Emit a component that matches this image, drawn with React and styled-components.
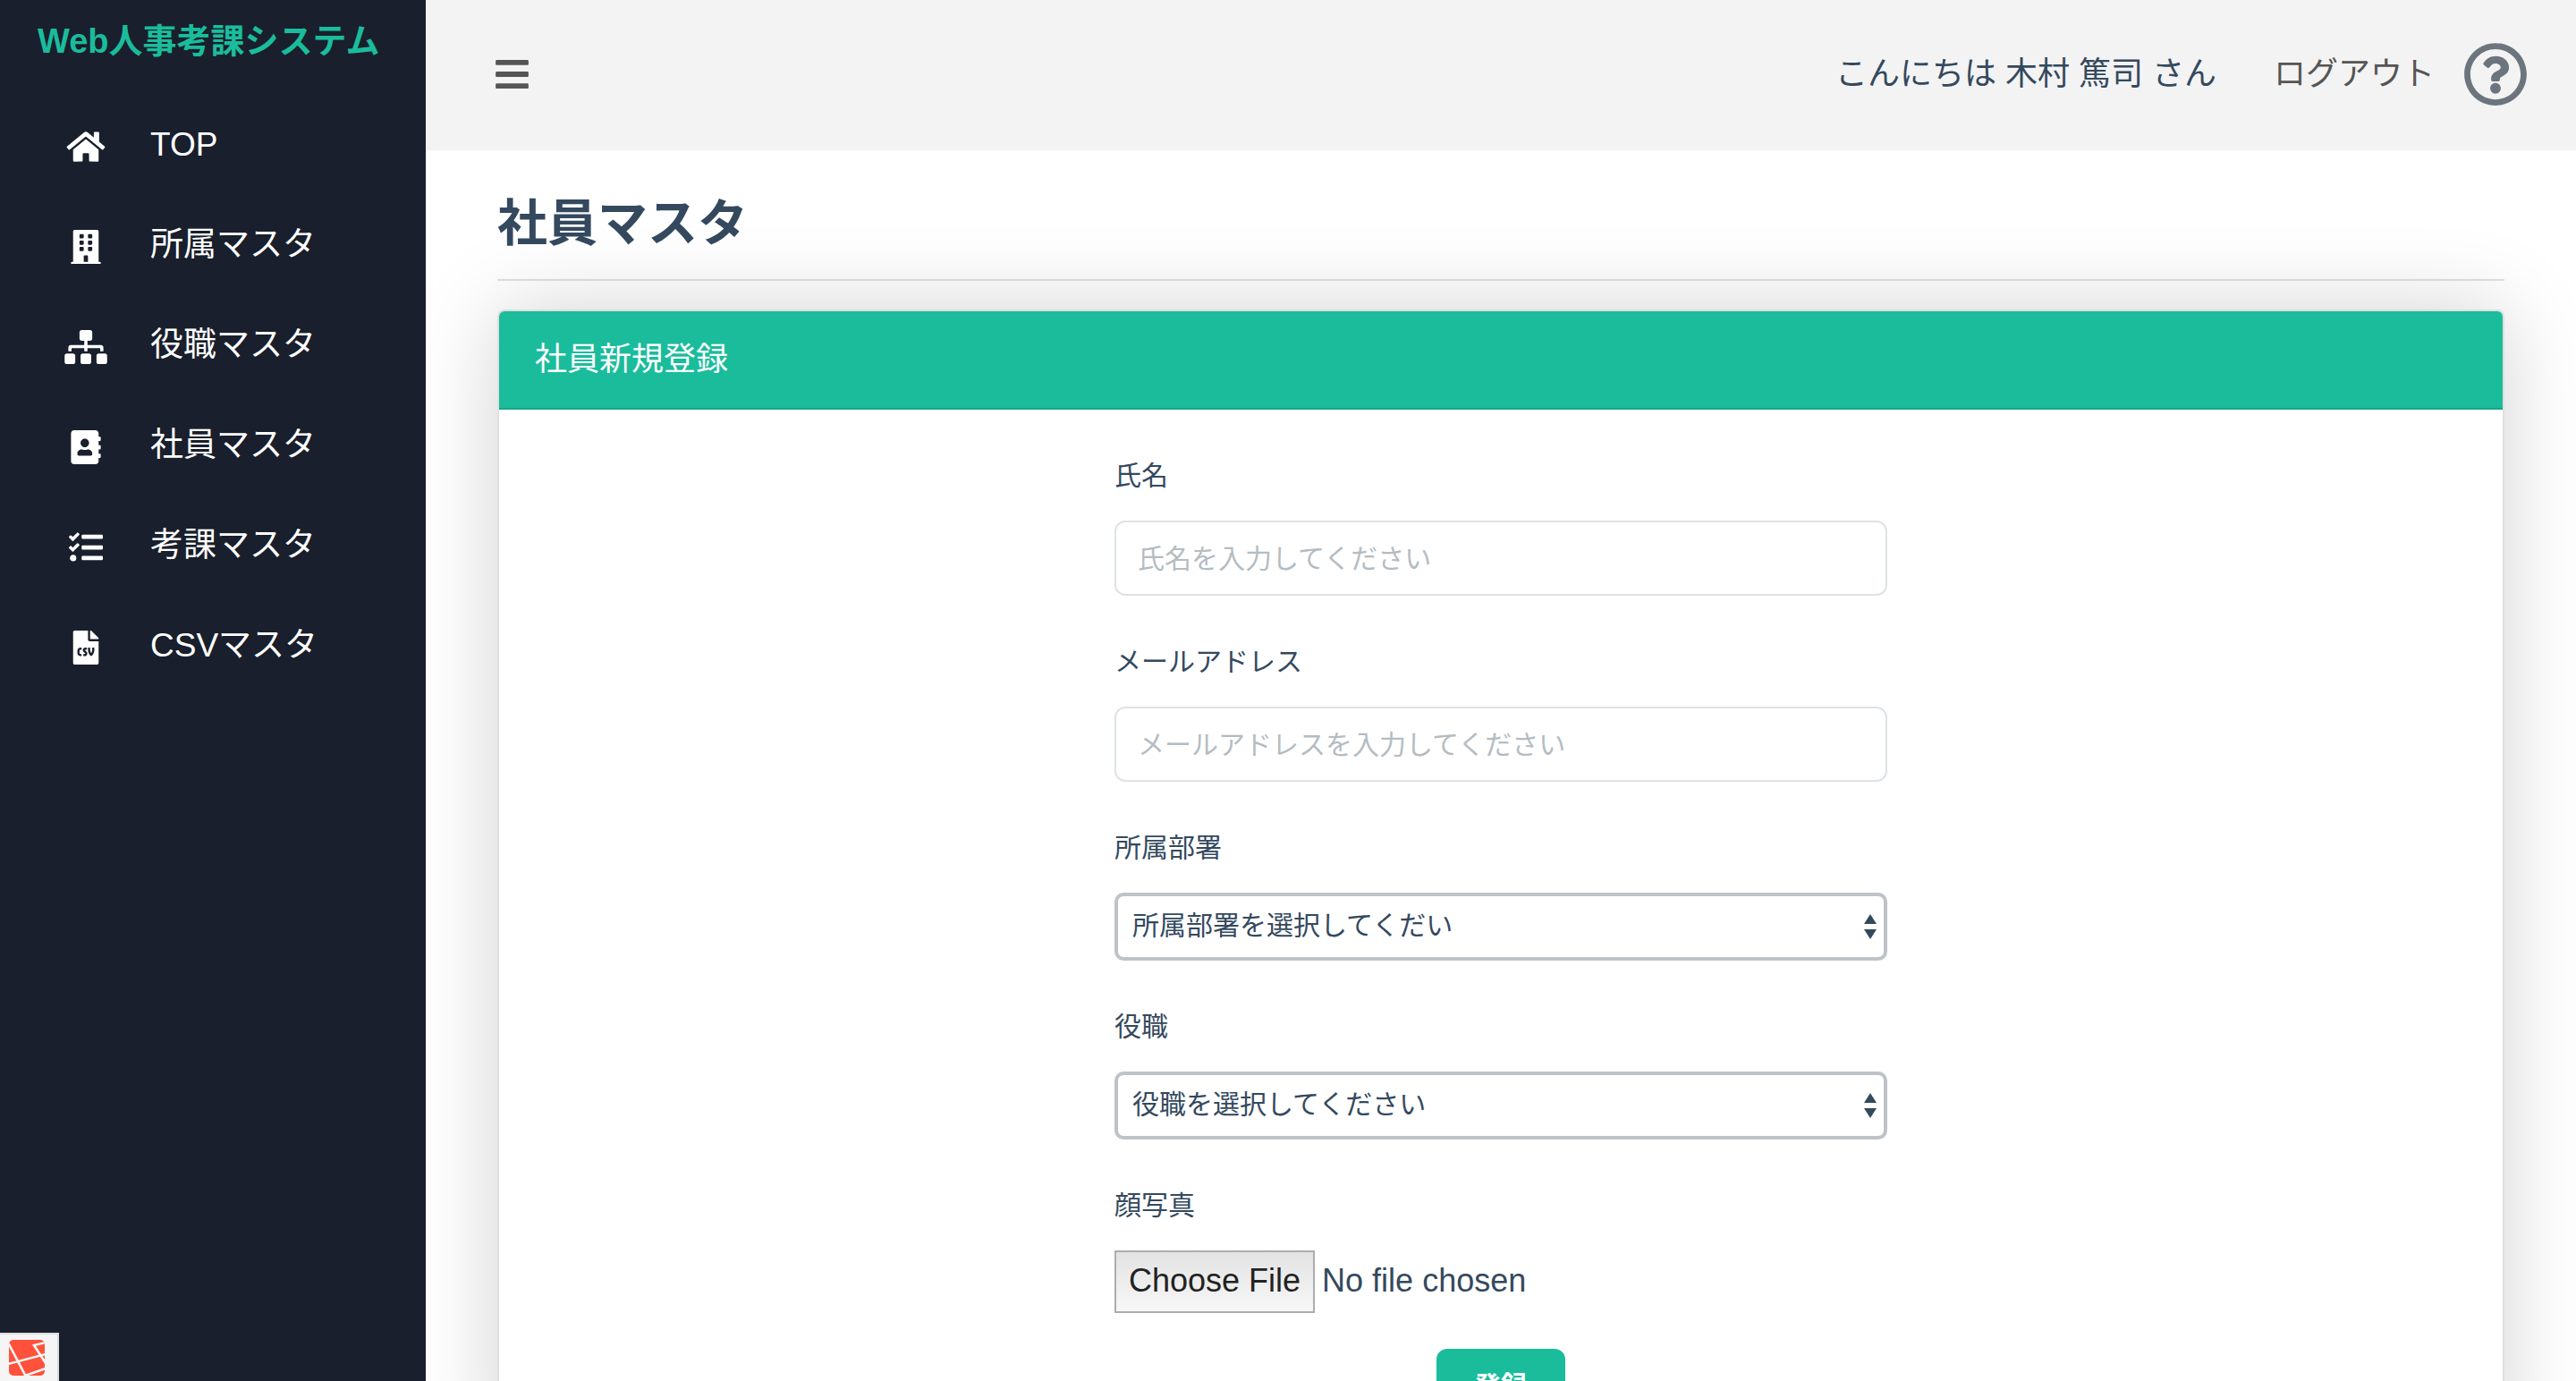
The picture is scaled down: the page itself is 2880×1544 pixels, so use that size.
import React from "react";
import styled, { createGlobalStyle } from "styled-components";
import {
  FaHome,
  FaBuilding,
  FaSitemap,
  FaAddressBook,
  FaTasks,
  FaFileCsv,
  FaBars,
  FaRegQuestionCircle,
} from "react-icons/fa";

const color = {
  ink: "#34495e",
  green: "#1abc9c",
  greenDark: "#17a689",
  navy: "#191f2c",
  line: "#dee2e6",
};

const GlobalStyle = createGlobalStyle`
  *, *::before, *::after { box-sizing: border-box; }
  body {
    margin: 0;
    background: #fff;
    color: ${color.ink};
    font-family: "Liberation Sans", "Noto Sans CJK JP", sans-serif;
    font-size: 30px;
    line-height: 44px;
  }
  button, input, select { font: inherit; color: inherit; margin: 0; }
  a { color: inherit; text-decoration: none; }
`;

const Shell = styled.div`
  display: grid;
  grid-template-columns: 476px minmax(0, 1fr);
  height: 100vh;
  overflow: hidden;
`;

const Sidebar = styled.aside`
  position: relative;
  z-index: 1;
  background: ${color.navy};
  color: #fff;
`;

const Brand = styled.a`
  display: block;
  height: 106px;
  padding: 18px 42px 0;
  color: ${color.green};
  font-size: 38px;
  font-weight: 700;
  line-height: 56px;
  white-space: nowrap;
`;

const Menu = styled.ul`
  list-style: none;
  margin: 0;
  padding: 0;
`;

const MenuLink = styled.a`
  display: grid;
  grid-template-columns: 48px 1fr;
  align-items: center;
  column-gap: 48px;
  height: 112px;
  padding-left: 72px;
  font-size: 37px;
  line-height: 52px;

  svg {
    width: 48px;
    height: 38px;
    margin-top: 4px;
  }
`;

const Page = styled.div`
  display: flex;
  flex-direction: column;
  min-width: 0;
  overflow-y: auto;
  scrollbar-width: none;
`;

const TopBar = styled.header`
  display: flex;
  align-items: center;
  flex: none;
  height: 168px;
  padding: 0 54px 2px 78px;
  background: #f3f3f3;
  font-size: 36px;
  line-height: 52px;
`;

const MenuToggle = styled.button`
  display: flex;
  padding: 0;
  border: 0;
  background: none;
  color: #555;
  cursor: pointer;

  svg {
    width: 37px;
    height: 42px;
  }
`;

const Greeting = styled.span`
  margin-left: auto;
`;

const Logout = styled.a`
  margin: 0 32px 0 64px;
  color: #555;
`;

const Help = styled.a`
  display: flex;
  color: #6c757d;
  font-size: 72px;
`;

const Content = styled.main`
  padding: 42px 80px;
`;

const PageTitle = styled.h1`
  margin: 0 0 32px;
  padding-bottom: 22px;
  border-bottom: 2px solid #e0e0e0;
  font-size: 56px;
  font-weight: 700;
  line-height: 80px;
`;

const Card = styled.section`
  border: 2px solid #dfdfdf;
  border-radius: 8px;
  background: #fff;
  box-shadow: 0 0 96px rgba(0, 0, 0, 0.175);
`;

const CardHeader = styled.h2`
  margin: 0;
  padding: 28px 40px;
  border-bottom: 2px solid ${color.greenDark};
  border-radius: 6px 6px 0 0;
  background: ${color.green};
  color: #fff;
  font-size: 36px;
  font-weight: 400;
  line-height: 52px;
`;

const CardBody = styled.form`
  display: flex;
  flex-direction: column;
  align-items: center;
  gap: 40px;
  padding: 40px;
`;

const Field = styled.div`
  width: 40%;
`;

const Label = styled.label`
  display: block;
  margin-bottom: 18px;
  padding-top: 2px;
  line-height: 64px;
`;

const TextInput = styled.input`
  display: block;
  width: 100%;
  height: 84px;
  padding: 2px 24px 0;
  border: 2px solid ${color.line};
  border-radius: 12px;
  background: #fff;

  &::placeholder {
    color: #b4bcc2;
    opacity: 1;
  }
`;

const SelectWrap = styled.div`
  position: relative;

  svg {
    position: absolute;
    top: 24px;
    right: 12px;
    pointer-events: none;
  }
`;

const Select = styled.select`
  display: block;
  appearance: none;
  width: 100%;
  height: 76px;
  padding: 0 40px 2px 16px;
  border: 4px solid #bdc3c7;
  border-radius: 10px;
  background: #fff;
`;

const FileInput = styled.input`
  display: block;
  width: 100%;
  height: 70px;
  font-size: 36px;
  line-height: 52px;

  &::file-selector-button {
    height: 70px;
    margin: 0 8px 0 0;
    padding: 0 14px 2px;
    border: 2px solid #adadad;
    border-radius: 0;
    background: linear-gradient(#e3e3e3, #f7f7f7);
    color: #222;
    font: inherit;
  }
`;

const Submit = styled.button`
  height: 84px;
  padding: 0 42px;
  border: 0;
  border-radius: 12px;
  background: ${color.green};
  color: #fff;
  font-weight: 700;
  cursor: pointer;
`;

const DebugBadge = styled.a`
  position: fixed;
  left: 0;
  bottom: 0;
  z-index: 2;
  display: block;
  width: 66px;
  height: 54px;
  padding: 6px 10px;
  border: 2px solid #ddd;
  border-width: 2px 2px 0 0;
  background: #f5f5f5;

  svg { display: block; }
`;

const menu = [
  { label: "TOP", Icon: FaHome },
  { label: "所属マスタ", Icon: FaBuilding },
  { label: "役職マスタ", Icon: FaSitemap },
  { label: "社員マスタ", Icon: FaAddressBook },
  { label: "考課マスタ", Icon: FaTasks },
  { label: "CSVマスタ", Icon: FaFileCsv },
];

function SelectField({ id, label, prompt }) {
  return (
    <Field>
      <Label htmlFor={id}>{label}</Label>
      <SelectWrap>
        <Select id={id} defaultValue="">
          <option value="">{prompt}</option>
        </Select>
        <svg width="14" height="28" viewBox="0 0 14 28" aria-hidden="true">
          <path d="M7 0L14 11H0ZM0 17H14L7 28Z" fill={color.ink} />
        </svg>
      </SelectWrap>
    </Field>
  );
}

function TextField({ id, label, type, placeholder }) {
  return (
    <Field>
      <Label htmlFor={id}>{label}</Label>
      <TextInput id={id} type={type} placeholder={placeholder} />
    </Field>
  );
}

export default function App() {
  return (
    <>
      <GlobalStyle />
      <Shell>
        <Sidebar>
          <Brand href="#">Web人事考課システム</Brand>
          <nav>
            <Menu>
              {menu.map(({ label, Icon }) => (
                <li key={label}>
                  <MenuLink href="#">
                    <Icon aria-hidden="true" />
                    <span>{label}</span>
                  </MenuLink>
                </li>
              ))}
            </Menu>
          </nav>
        </Sidebar>
        <Page>
          <TopBar>
            <MenuToggle type="button" aria-label="メニュー">
              <FaBars />
            </MenuToggle>
            <Greeting>こんにちは 木村 篤司 さん</Greeting>
            <Logout href="#">ログアウト</Logout>
            <Help href="#" aria-label="ヘルプ">
              <FaRegQuestionCircle />
            </Help>
          </TopBar>
          <Content>
            <PageTitle>社員マスタ</PageTitle>
            <Card>
              <CardHeader>社員新規登録</CardHeader>
              <CardBody>
                <TextField id="name" type="text" label="氏名" placeholder="氏名を入力してください" />
                <TextField
                  id="email"
                  type="email"
                  label="メールアドレス"
                  placeholder="メールアドレスを入力してください"
                />
                <SelectField id="department" label="所属部署" prompt="所属部署を選択してくだい" />
                <SelectField id="position" label="役職" prompt="役職を選択してください" />
                <Field>
                  <Label htmlFor="photo">顔写真</Label>
                  <FileInput id="photo" type="file" />
                </Field>
                <Submit type="submit">登録</Submit>
              </CardBody>
            </Card>
          </Content>
        </Page>
      </Shell>
      <DebugBadge href="#" aria-label="デバッグバー">
        <svg width="40" height="40" viewBox="0 0 40 40">
          <defs>
            <clipPath id="badge">
              <rect width="40" height="40" rx="5" />
            </clipPath>
          </defs>
          <g clipPath="url(#badge)">
            <rect width="40" height="40" fill="#ff513b" />
            <path
              d="M-1 3L19 41M-1 27L41 16M41 3L28 6L41 26M18 40L41 32"
              fill="none"
              stroke="#f5f5f5"
              strokeWidth="2.6"
            />
          </g>
        </svg>
      </DebugBadge>
    </>
  );
}
